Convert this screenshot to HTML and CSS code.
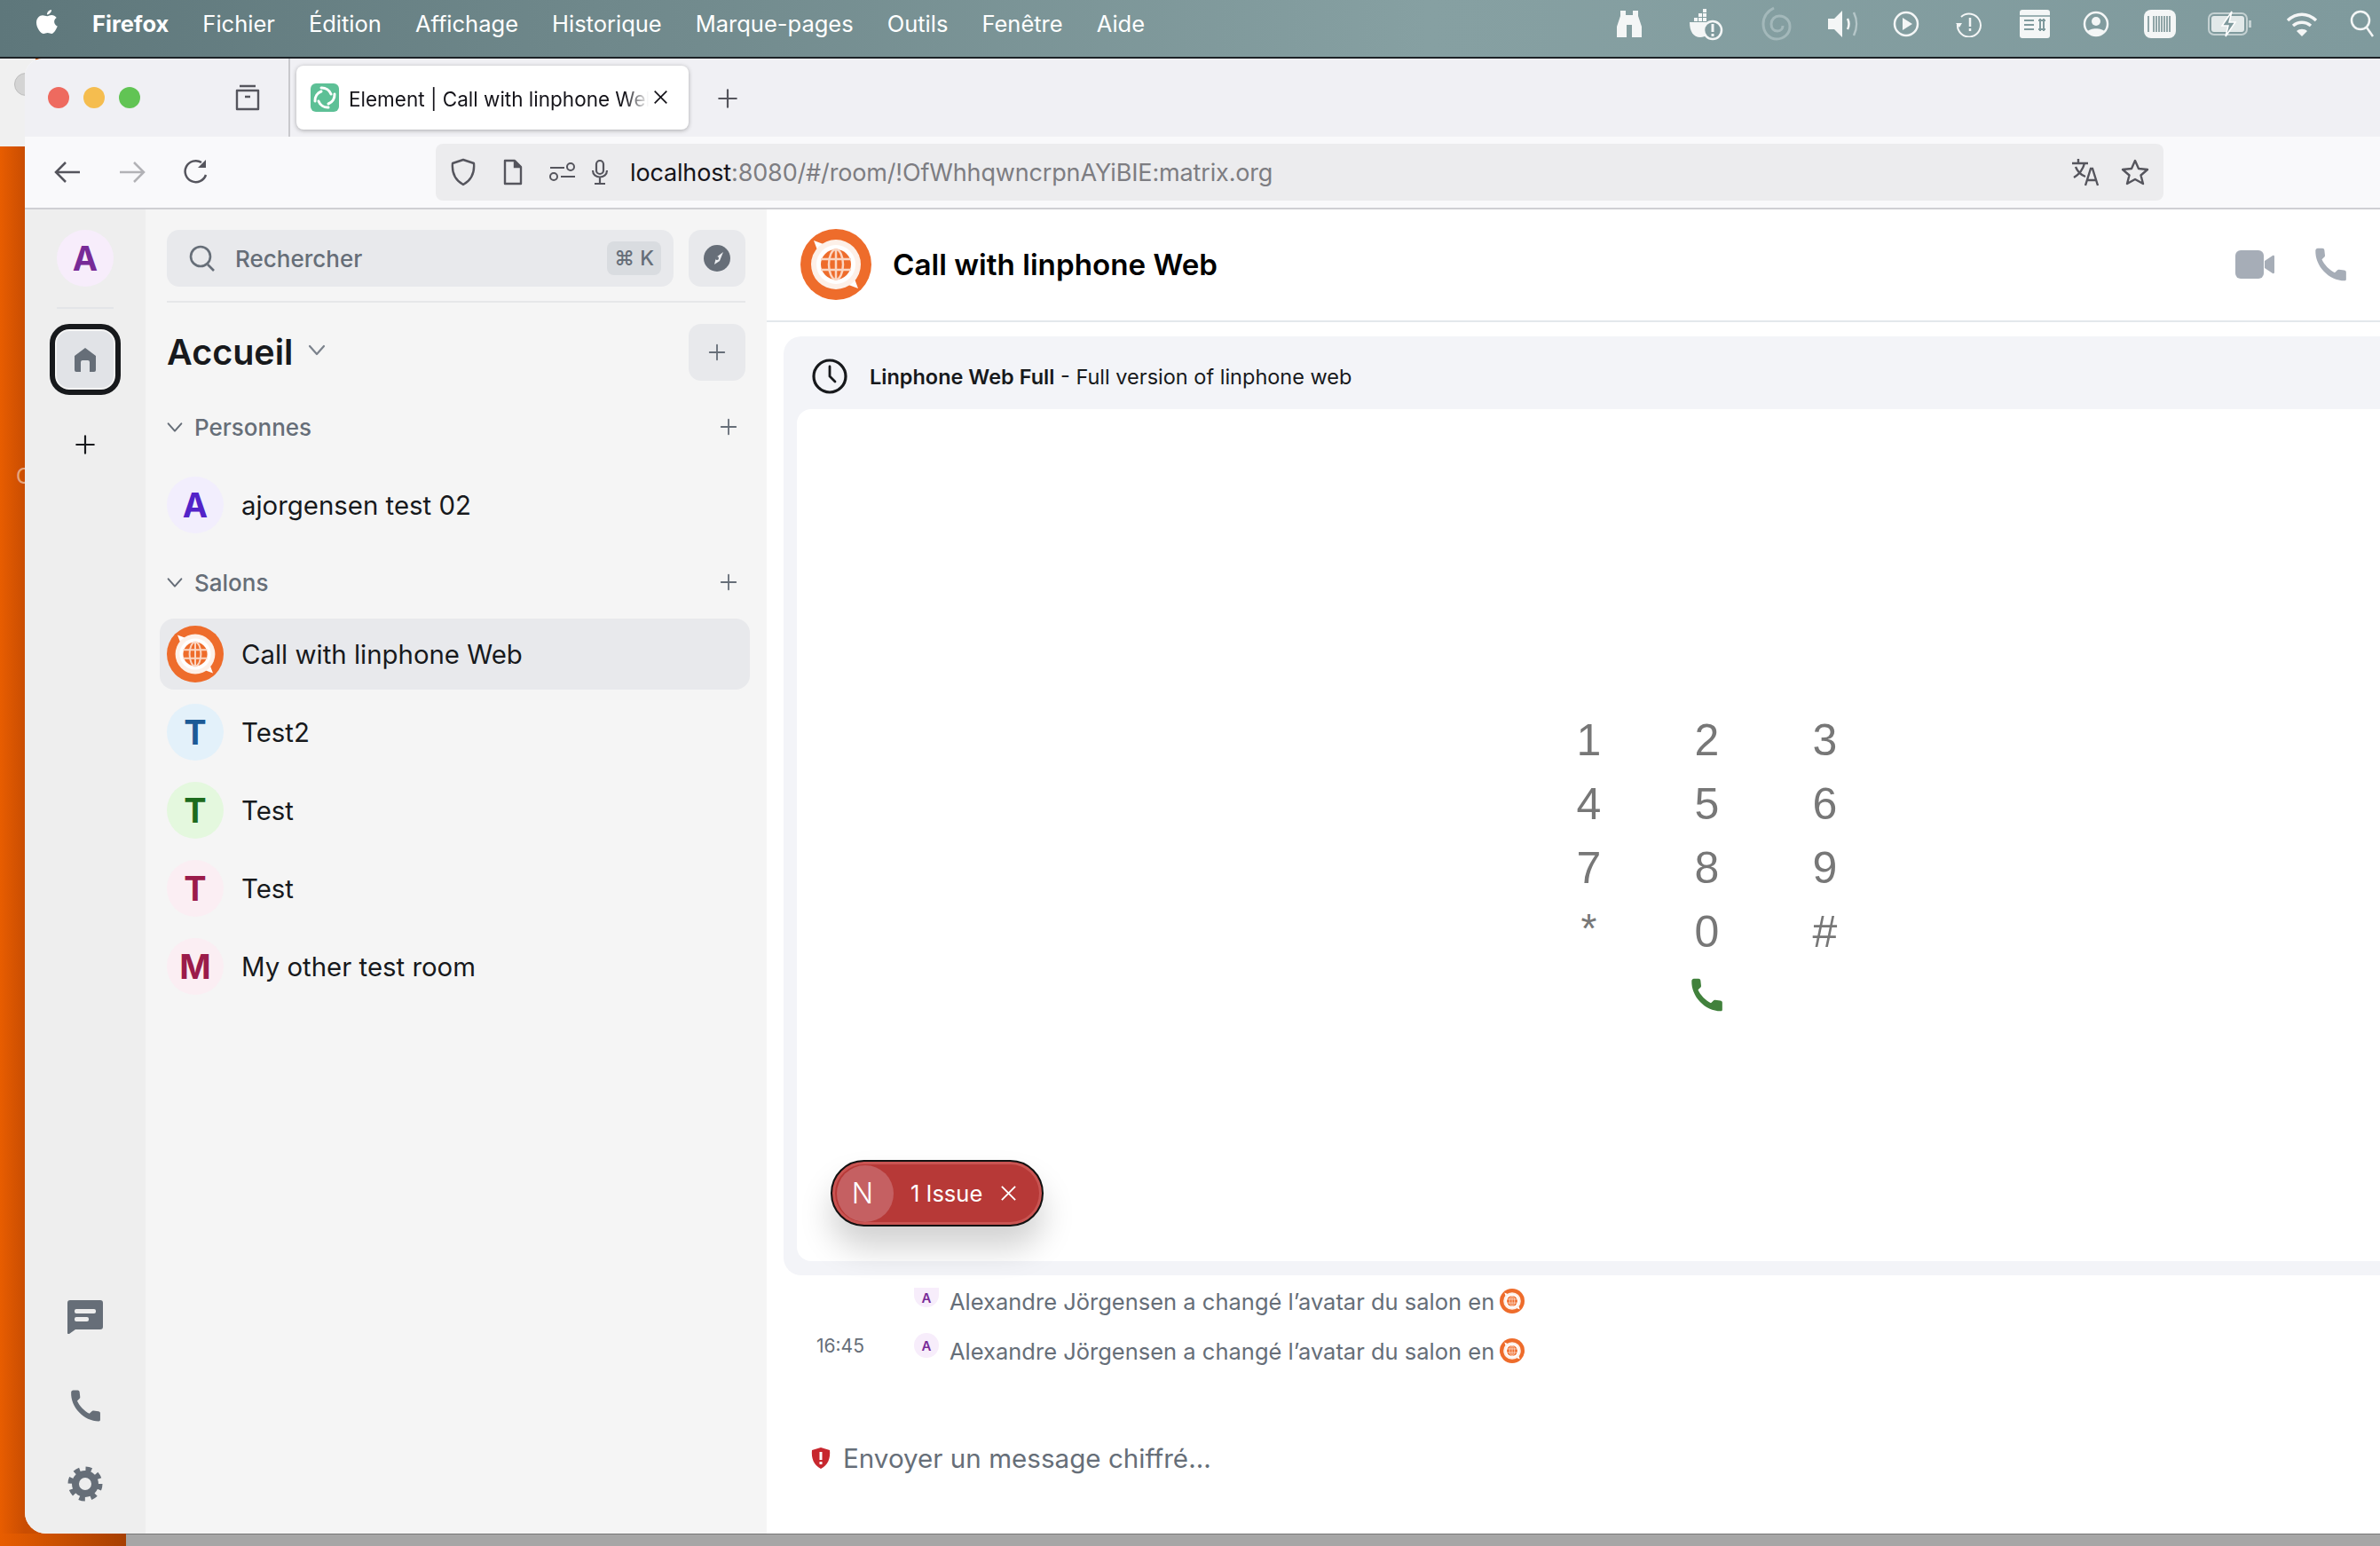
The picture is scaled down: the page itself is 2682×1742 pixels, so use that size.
FILE: index.html
```html
<!DOCTYPE html>
<html>
<head>
  <meta charset="UTF-8">
  <title>Element | Call with linphone Web</title>
  <link rel="stylesheet" href="styles.css">
</head>
<body>
  <svg class="defs" width="0" height="0">
    <symbol id="lin" viewBox="0 0 80 80">
      <circle cx="40" cy="40" r="40" fill="#ee6c2b"/>
      <path d="M15 13l16 6-10 10zM65 67l-16-6 10-10z" fill="#fff"/>
      <circle cx="40" cy="40" r="28" fill="#fdf0e8"/>
      <circle cx="40" cy="40" r="22" fill="#fff"/>
      <circle cx="40" cy="40" r="17" fill="#ee6c2b"/>
      <path d="M23 34h34M23 46h34M40 23v34" stroke="#fbd6c2" stroke-width="2.500"/>
      <ellipse cx="40" cy="40" rx="8" ry="17" fill="none" stroke="#fbd6c2" stroke-width="2.500"/>
    </symbol>
    <symbol id="phone" viewBox="0 0 24 24">
      <path d="M3.500 1h3.200c.7 0 1.200.5 1.300 1.200l.4 3.600c0 .5-.1.900-.5 1.200L6.300 8.600c1.500 3.500 5.200 7.400 8.700 9l1.700-1.700c.3-.3.700-.5 1.200-.4l3.500.4c.8.1 1.300.6 1.300 1.300V22c0 .6-.5 1-1 1C11 23 1.500 13 2 2.400 2.100 1.600 2.700 1 3.500 1z"/>
    </symbol>
    <symbol id="plus" viewBox="0 0 24 24">
      <path d="M12 3v18M3 12h18" fill="none" stroke="currentColor" stroke-width="2" stroke-linecap="round"/>
    </symbol>
    <symbol id="chev" viewBox="0 0 24 24">
      <path d="M4 8l8 9 8-9" fill="none" stroke="currentColor" stroke-width="2.200" stroke-linecap="round" stroke-linejoin="round"/>
    </symbol>
    <symbol id="cross" viewBox="0 0 20 20">
      <path d="M2 2l16 16M18 2L2 18" fill="none" stroke="currentColor" stroke-width="2"/>
    </symbol>
  </svg>

  <div class="menubar">
    <svg class="apple" width="26" height="32" viewBox="0 0 26 32"><path d="M18 1c.2 2.500-2.200 5.500-5 5.400C12.800 3.800 15.400 1.200 18 1zM13.200 8.200c1.400 0 2.800-1.200 5-1.200 2 0 4.200 1 5.500 3-3.800 2.300-3.200 7.800 1 9.500-1 3-4 8.500-6.500 8.500-1.700 0-2.500-1-4.500-1s-3 1-4.500 1C6 28 1 21.500 1 15.500 1 10.500 4.500 7.300 8 7.300c2 0 3.700.9 5.200.9z" fill="#fff"/></svg>
    <span class="menu-item app-name">Firefox</span>
    <span class="menu-item">Fichier</span>
    <span class="menu-item">Édition</span>
    <span class="menu-item">Affichage</span>
    <span class="menu-item">Historique</span>
    <span class="menu-item">Marque-pages</span>
    <span class="menu-item">Outils</span>
    <span class="menu-item">Fenêtre</span>
    <span class="menu-item">Aide</span>
    <div class="tray">
      <span><svg width="32" height="34" viewBox="0 0 32 34" fill="#f4f6f6"><path d="M6 2h6v5h8V2h6v6l4 12v12H19V18h-6v14H2V20L6 8z"/></svg></span>
      <span><svg width="40" height="40" viewBox="0 0 40 40"><path d="M2 18h23v6a11 11 0 0 1-11 11C6 35 2 28 2 18z" fill="#f4f6f6"/><path d="M7 13h4v4H7zM12 13h4v4h-4zM17 13h4v4h-4zM12 8h4v4h-4zM17 8h4v4h-4zM17 3h4v4h-4z" fill="#f4f6f6"/><circle cx="28" cy="27" r="10" fill="#7f9a9d" stroke="#f4f6f6" stroke-width="2.500"/><path d="M28 20v9M28 31v3" stroke="#f4f6f6" stroke-width="3"/></svg></span>
      <span><svg width="34" height="40" viewBox="0 0 34 40" fill="none" stroke="#a3b8ba" stroke-width="3"><path d="M14 2C6 6 2 12 2 20c0 10 7 17 15 17s15-6 15-14c0-7-5-12-12-12-5 0-9 4-9 9s3 8 7 8 6-3 6-6"/></svg></span>
      <span><svg width="40" height="40" viewBox="0 0 40 40" fill="none"><path d="M2 14h7l9-9v30l-9-9H2z" fill="#f4f6f6"/><path d="M24 14c2 4 2 8 0 12" stroke="#f4f6f6" stroke-width="2.500"/><path d="M31 7c4 8 4 18 0 26" stroke="#b5c6c8" stroke-width="2.500"/></svg></span>
      <span><svg width="30" height="30" viewBox="0 0 30 30" fill="none"><circle cx="15" cy="15" r="13" stroke="#f4f6f6" stroke-width="2.500"/><path d="M11 8l11 7-11 7z" fill="#f4f6f6"/></svg></span>
      <span><svg width="30" height="30" viewBox="0 0 30 30" fill="none"><path d="M6 7a13 13 0 1 1-4 8" stroke="#f4f6f6" stroke-width="2"/><path d="M0 14h7l-3 5z" fill="#f4f6f6"/><path d="M16 8v10M16 20v3" stroke="#f4f6f6" stroke-width="2.500"/></svg></span>
      <span><svg width="34" height="32" viewBox="0 0 34 32"><rect width="34" height="32" rx="3" fill="#f4f6f6"/><path d="M0 7h34" stroke="#7f9a9d" stroke-width="1.500"/><path d="M5 12h11M5 17h11M5 22h11M21 12h8M21 22h8M23 10v14M27 10v14" stroke="#7f9a9d" stroke-width="2"/></svg></span>
      <span><svg width="30" height="30" viewBox="0 0 30 30" fill="none"><circle cx="15" cy="15" r="13" stroke="#f4f6f6" stroke-width="2.500"/><circle cx="15" cy="12" r="5" fill="#f4f6f6"/><path d="M5 24c3-5 17-5 20 0-5 5-15 5-20 0z" fill="#f4f6f6"/></svg></span>
      <span><svg width="36" height="32" viewBox="0 0 36 32"><rect width="36" height="32" rx="8" fill="#f4f6f6"/><path d="M5 7v18M11 7v18M14 7v18M17 7v18M20 7v18M23 7v18M26 7v18M29 7v18" stroke="#6f8a8d" stroke-width="1.500"/></svg></span>
      <span><svg width="50" height="30" viewBox="0 0 50 30" fill="none"><rect x="1" y="3" width="43" height="24" rx="6" stroke="#c4d1d2" stroke-width="2"/><rect x="4" y="6" width="37" height="18" rx="3" fill="#e2e9e9"/><path d="M46 11h3v8h-3z" fill="#c4d1d2"/><path d="M27 1L16 17h7l-3 12 11-16h-7z" fill="#7f9a9d" stroke="#fff" stroke-width="1.500"/></svg></span>
      <span><svg width="36" height="30" viewBox="0 0 36 30" fill="none" stroke="#f4f6f6" stroke-width="3.500"><path d="M2 11c10-9 22-9 32 0M8 17c6-5 14-5 20 0M13 22"/><path d="M18 29l-6-6c3-3 9-3 12 0z" fill="#f4f6f6" stroke="none"/></svg></span>
      <span><svg width="30" height="32" viewBox="0 0 30 32" fill="none" stroke="#f4f6f6" stroke-width="2.500"><circle cx="12" cy="12" r="10"/><path d="M19 20l7 10"/></svg></span>
    </div>
  </div>
  <div class="menu-edge"></div>

  <div class="desktop">
    <div class="desktop-main">
      <div class="back-window"></div>
      <span class="desk-glyph">C</span>
      <div class="browser">
        <div class="tabbar">
          <div class="lights">
            <i class="light red"></i><i class="light yellow"></i><i class="light green"></i>
          </div>
          <svg class="tabs-icon" width="32" height="32" viewBox="0 0 32 32" fill="none" stroke="#55555d" stroke-width="2.400"><path d="M7 3h18M4 8h24v21H4z" stroke-linejoin="round"/><path d="M13 15h6"/></svg>
          <div class="tab">
            <svg width="32" height="32" viewBox="0 0 32 32"><rect width="32" height="32" rx="6" fill="#5dc096"/><g fill="none" stroke="#fff" stroke-width="3" stroke-linecap="round"><path d="M12 5a11 11 0 0 1 11 7"/><path d="M27 12a11 11 0 0 1-7 11"/><path d="M20 27a11 11 0 0 1-11-7"/><path d="M5 20a11 11 0 0 1 7-11"/></g></svg>
            <span class="tab-title">Element | Call with linphone Web</span>
            <svg class="tab-close" width="17" height="17" color="#15141a"><use href="#cross"/></svg>
          </div>
          <svg class="tab-new" width="26" height="26" color="#55555d"><use href="#plus"/></svg>
        </div>
        <div class="toolbar">
          <svg class="nav" width="32" height="28" viewBox="0 0 32 28" fill="none" stroke="#55555d" stroke-width="2.500"><path d="M30 14H4M14 3L3 14l11 11"/></svg>
          <svg class="nav" width="32" height="28" viewBox="0 0 32 28" fill="none" stroke="#b2b2b6" stroke-width="2.500"><path d="M2 14h26M18 3l11 11-11 11"/></svg>
          <svg class="nav" width="30" height="30" viewBox="0 0 30 30" fill="none" stroke="#55555d" stroke-width="2.500"><path d="M26 18A12 12 0 1 1 21 4"/><path d="M26 1v9h-9z" fill="#55555d" stroke="none"/></svg>
          <div class="urlbar">
            <svg width="30" height="32" viewBox="0 0 30 32" fill="none" stroke="#55555d" stroke-width="2.400"><path d="M15 2l12 4c1 11-3 19-12 24C6 25 2 17 3 6z" stroke-linejoin="round"/></svg>
            <svg class="url-doc" width="24" height="30" viewBox="0 0 24 30" fill="none" stroke="#55555d" stroke-width="2.400"><path d="M3 2h11l7 7v19H3z" stroke-linejoin="round"/><path d="M14 2v7h7" fill="#55555d"/></svg>
            <svg class="url-perm" width="30" height="24" viewBox="0 0 30 24" fill="none" stroke="#55555d" stroke-width="2"><path d="M1 7h16M13 17h16"/><circle cx="24" cy="6" r="4"/><circle cx="5" cy="17" r="4"/></svg>
            <svg class="url-mic" width="20" height="30" viewBox="0 0 20 30" fill="none" stroke="#55555d" stroke-width="2.200"><rect x="6" y="2" width="8" height="15" rx="4"/><path d="M2 13c0 10 16 10 16 0M10 21v7M4 28h12"/></svg>
            <div class="url-text"><span class="url-host">localhost</span>:8080/#/room/!OfWhhqwncrpnAYiBIE:matrix.org</div>
            <svg class="url-trans" width="32" height="32" viewBox="0 0 32 32" fill="none" stroke="#55555d" stroke-width="2.400"><path d="M1 6h18M8 1v5M15 6C13 14 8 19 3 22M5 10c2 5 6 9 11 11M16 31l6-19h2l6 19M18 25h10"/></svg>
            <svg width="32" height="32" viewBox="0 0 32 32" fill="none" stroke="#55555d" stroke-width="2.400"><path d="M16 3l4 9 10 1-7.500 6.500L25 29l-9-5-9 5 2.500-9.500L2 13l10-1z" stroke-linejoin="round"/></svg>
          </div>
        </div>

        <div class="app">
          <nav class="rail">
            <div class="avatar space-avatar">A</div>
            <div class="rail-sep"></div>
            <div class="home-btn">
              <svg width="28" height="28" viewBox="0 0 28 28" fill="#666e78"><path d="M14 1L26 10v16a2 2 0 0 1-2 2h-5V17a2 2 0 0 0-2-2h-6a2 2 0 0 0-2 2v11H4a2 2 0 0 1-2-2V10z"/></svg>
            </div>
            <svg class="rail-plus" width="26" height="26" color="#17191c"><use href="#plus"/></svg>
            <div class="rail-bottom">
              <svg class="rail-chat" width="40" height="38" viewBox="0 0 40 38"><path d="M3 0h34a3 3 0 0 1 3 3v27a3 3 0 0 1-3 3H9l-7 5c-1 .5-2 0-2-1V3a3 3 0 0 1 3-3z" fill="#666e78"/><rect x="8" y="10" width="24" height="5" rx="2" fill="#eee"/><rect x="8" y="19" width="16" height="5" rx="2" fill="#eee"/></svg>
              <svg class="rail-phone" width="38" height="38" fill="#666e78"><use href="#phone"/></svg>
              <svg class="rail-gear" width="40" height="40" viewBox="0 0 40 40" fill="none" stroke="#666e78"><circle cx="20" cy="20" r="11" stroke-width="8"/><circle cx="20" cy="20" r="16.500" stroke-width="6" stroke-dasharray="6.500 6.460"/></svg>
            </div>
          </nav>

          <aside class="panel">
            <div class="search-row">
              <div class="search">
                <svg width="32" height="32" viewBox="0 0 32 32" fill="none" stroke="#666e78" stroke-width="2.600"><circle cx="14" cy="14" r="11"/><path d="M22 23l7 7"/></svg>
                <span class="search-label">Rechercher</span>
                <span class="kbd">⌘ K</span>
              </div>
              <div class="square-btn">
                <svg width="30" height="30" viewBox="0 0 30 30"><circle cx="15" cy="15" r="15" fill="#666e78"/><path d="M22 8l-4 10-6 4 2-8z" fill="#eceef1"/><circle cx="15" cy="15" r="2" fill="#666e78"/></svg>
              </div>
            </div>
            <div class="panel-sep"></div>
            <div class="home-row">
              <h1 class="home-title">Accueil</h1>
              <svg class="home-chev" width="24" height="24" color="#7b828c"><use href="#chev"/></svg>
              <div class="square-btn push"><svg width="22" height="22" color="#666e78"><use href="#plus"/></svg></div>
            </div>

            <div class="section-head">
              <svg class="section-chev" width="22" height="22" color="#666e78"><use href="#chev"/></svg>
              <span class="section-name">Personnes</span>
              <svg class="section-add" width="22" height="22" color="#666e78"><use href="#plus"/></svg>
            </div>
            <div class="room first-room">
              <div class="avatar av-violet">A</div><span class="room-name">ajorgensen test 02</span>
            </div>

            <div class="section-head salons">
              <svg class="section-chev" width="22" height="22" color="#666e78"><use href="#chev"/></svg>
              <span class="section-name">Salons</span>
              <svg class="section-add" width="22" height="22" color="#666e78"><use href="#plus"/></svg>
            </div>
            <div class="room selected">
              <svg class="room-pic" width="64" height="64"><use href="#lin"/></svg><span class="room-name">Call with linphone Web</span>
            </div>
            <div class="room"><div class="avatar av-blue">T</div><span class="room-name">Test2</span></div>
            <div class="room"><div class="avatar av-green">T</div><span class="room-name">Test</span></div>
            <div class="room"><div class="avatar av-pink">T</div><span class="room-name">Test</span></div>
            <div class="room"><div class="avatar av-pink">M</div><span class="room-name">My other test room</span></div>
          </aside>

          <main class="main">
            <header class="room-head">
              <svg width="80" height="80"><use href="#lin"/></svg>
              <h2 class="room-title">Call with linphone Web</h2>
              <svg class="head-video" width="44" height="34" viewBox="0 0 44 34" fill="#a6adb7"><rect y="1" width="32" height="32" rx="6"/><path d="M33 13l9-6c1-.5 2 0 2 1v18c0 1-1 1.500-2 1l-9-6z"/></svg>
              <svg class="head-phone" width="40" height="40" fill="#a6adb7"><use href="#phone"/></svg>
            </header>

            <section class="widget">
              <div class="widget-title">
                <svg width="40" height="40" viewBox="0 0 40 40" fill="none" stroke="#17191c" stroke-width="3.200"><circle cx="20" cy="20" r="18"/><path d="M20 9v11l6 6" stroke-linecap="round" stroke-width="2.800"/></svg>
                <span class="widget-text"><b>Linphone Web Full</b> - Full version of linphone web</span>
              </div>
              <div class="widget-frame">
                <div class="dialpad">
                  <span>1</span><span>2</span><span>3</span>
                  <span>4</span><span>5</span><span>6</span>
                  <span>7</span><span>8</span><span>9</span>
                  <span class="star">*</span><span>0</span><span>#</span>
                  <span class="dial-call"><svg width="40" height="40" fill="#41813c"><use href="#phone"/></svg></span>
                </div>
                <div class="issue-pill">
                  <span class="issue-n">N</span>
                  <span class="issue-text">1 Issue</span>
                  <svg class="issue-x" width="19" height="19" color="#fff"><use href="#cross"/></svg>
                </div>
              </div>
            </section>

            <div class="timeline">
              <div class="event clipped">
                <span class="event-time"></span>
                <span class="mini-avatar">A</span>
                <span class="event-text">Alexandre Jörgensen a changé l’avatar du salon en</span>
                <svg class="mini-pic" width="28" height="28"><use href="#lin"/></svg>
              </div>
              <div class="event">
                <span class="event-time">16:45</span>
                <span class="mini-avatar">A</span>
                <span class="event-text">Alexandre Jörgensen a changé l’avatar du salon en</span>
                <svg class="mini-pic" width="28" height="28"><use href="#lin"/></svg>
              </div>
            </div>

            <div class="composer">
              <svg width="22" height="24" viewBox="0 0 22 24"><path d="M11 0l10 3c1 9-2 17-10 21C3 20 0 12 1 3z" fill="#c7272e"/><path d="M11 5v9M11 16v3" stroke="#fff" stroke-width="3"/></svg>
              <span class="composer-text">Envoyer un message chiffré...</span>
            </div>
          </main>
        </div>
      </div>
    </div>
    <div class="desktop-bottom">
      <div class="bottom-orange"></div>
      <div class="bottom-grey"></div>
    </div>
  </div>
</body>
</html>
```

FILE: styles.css
```css
* {
  box-sizing: border-box;
}
html, body {
  margin: 0;
  width: 2682px;
  height: 1742px;
  overflow: hidden;
}
body {
  font-family: Inter, "Liberation Sans", sans-serif;
  background: #a5a5a5;
}
.defs {
  position: absolute;
}

/* mac menu bar */
.menubar {
  height: 64px;
  display: flex;
  align-items: center;
  padding: 0 0 12px 40px;
  color: #fff;
  font-size: 25.500px;
  background: linear-gradient(90deg, #5e777b 0%, #6f888b 25%, #86a0a2 60%, #7f9a9d 100%);
}
.menu-edge {
  height: 2px;
  background: #1c2226;
}
.apple {
  margin-right: 38px;
}
.menu-item {
  margin-right: 38px;
}
.app-name {
  font-weight: 700;
}
.tray {
  position: absolute;
  top: 7px;
  left: 1793px;
  display: flex;
  align-items: center;
  height: 40px;
}
.tray span {
  display: flex;
  justify-content: center;
  align-items: center;
}
.tray span:nth-child(1) { width: 86px; }
.tray span:nth-child(2) { width: 86px; }
.tray span:nth-child(3) { width: 74px; }
.tray span:nth-child(4) { width: 78px; }
.tray span:nth-child(5) { width: 62px; }
.tray span:nth-child(6) { width: 80px; }
.tray span:nth-child(7) { width: 68px; }
.tray span:nth-child(8) { width: 70px; }
.tray span:nth-child(9) { width: 74px; }
.tray span:nth-child(10) { width: 84px; }
.tray span:nth-child(11) { width: 78px; }
.tray span:nth-child(12) { width: 60px; }

/* desktop around the window */
.desktop {
  height: 1676px;
  display: flex;
  flex-direction: column;
}
.desktop-main {
  height: 1662px;
  display: flex;
  background: linear-gradient(90deg, #e85d00 0, #c94d02 28px);
  position: relative;
}
.back-window {
  position: absolute;
  left: 0;
  top: 0;
  width: 40px;
  height: 99px;
  background: #f0f0f0;
}
.back-window::after {
  content: "";
  position: absolute;
  left: 16px;
  top: 16px;
  width: 24px;
  height: 24px;
  border-radius: 50%;
  background: #d4d4d4;
  border: 1px solid #bdbdbd;
}
.desk-glyph {
  position: absolute;
  left: 18px;
  top: 456px;
  font-size: 24px;
  color: rgba(255, 255, 255, 0.5);
}
.desktop-bottom {
  height: 14px;
  display: flex;
}
.bottom-orange {
  width: 142px;
  background: linear-gradient(90deg, #e85d00, #a63f02);
}
.bottom-grey {
  flex: 1;
  background: #a6a6a6;
  border-top: 1px solid #777;
}

/* browser window */
.browser {
  position: relative;
  margin-left: 28px;
  width: 2654px;
  flex: none;
  display: flex;
  flex-direction: column;
  border-radius: 20px 0 0 24px;
  overflow: hidden;
  background: #fff;
}
.tabbar {
  height: 88px;
  display: flex;
  align-items: center;
  background: #f0f0f4;
}
.lights {
  display: flex;
  gap: 16px;
  margin-left: 26px;
}
.light {
  width: 24px;
  height: 24px;
  border-radius: 50%;
}
.red { background: #ee6a5f; }
.yellow { background: #f5bd4f; }
.green { background: #61c454; }
.tabs-icon {
  margin-left: 105px;
}
.tab {
  align-self: flex-start;
  margin: 8px 0 0 39px;
  width: 442px;
  height: 72px;
  background: #fff;
  border-radius: 8px;
  box-shadow: 0 1px 5px rgba(0, 0, 0, 0.3);
  display: flex;
  align-items: center;
  padding-left: 16px;
  position: relative;
}
.tabs-icon + .tab::before {
  content: "";
  position: absolute;
  left: -9px;
  top: -8px;
  height: 88px;
  width: 2px;
  background: #c9c9cd;
}
.tab-title {
  margin: 3px 0 0 11px;
  width: 338px;
  overflow: hidden;
  white-space: nowrap;
  font-size: 22.500px;
  color: #15141a;
  -webkit-mask-image: linear-gradient(90deg, #000 92%, transparent);
}
.tab-close {
  margin-left: 5px;
  margin-top: -2px;
  flex: none;
}
.tab-new {
  margin-left: 31px;
  margin-top: 2px;
}
.toolbar {
  height: 82px;
  display: flex;
  align-items: center;
  background: #f9f9fb;
  border-bottom: 2px solid #cfcfd3;
  padding-left: 32px;
}
.nav {
  margin-right: 41px;
}
.urlbar {
  margin-left: 214px;
  height: 64px;
  width: 1947px;
  background: #ececee;
  border-radius: 8px;
  display: flex;
  align-items: center;
  padding: 0 16px 0 16px;
}
.url-doc {
  margin-left: 29px;
}
.url-perm {
  margin-left: 29px;
}
.url-mic {
  margin-left: 17px;
}
.url-text {
  margin-left: 24px;
  flex: 1;
  font-size: 27px;
  letter-spacing: -0.15px;
  color: #7d7d82;
}
.url-host {
  color: #15141a;
}
.url-trans {
  margin-right: 24px;
}

/* element app */
.app {
  height: 1492px;
  display: flex;
}
.rail {
  width: 136px;
  flex: none;
  background: #eeeeee;
  display: flex;
  flex-direction: column;
  align-items: center;
  padding-top: 23px;
}
.avatar {
  width: 64px;
  height: 64px;
  flex: none;
  border-radius: 50%;
  display: flex;
  align-items: center;
  justify-content: center;
  font-size: 38px;
  font-weight: 700;
}
.space-avatar {
  background: #f7edfb;
  color: #772a97;
}
.rail-sep {
  width: 64px;
  height: 2px;
  margin-top: 23px;
  background: #e3e5e8;
}
.home-btn {
  margin-top: 17px;
  width: 80px;
  height: 80px;
  border: 6px solid #17191c;
  border-radius: 22px;
  background: #e1e3e7;
  box-shadow: inset 0 0 0 2px #f5f5f5;
  display: flex;
  align-items: center;
  justify-content: center;
}
.rail-plus {
  margin-top: 43px;
}
.rail-bottom {
  margin-top: auto;
  display: flex;
  flex-direction: column;
  align-items: center;
  padding-bottom: 36px;
}
.rail-phone {
  margin-top: 62px;
}
.rail-gear {
  margin-top: 49px;
}
.panel {
  width: 700px;
  flex: none;
  background: #f5f5f5;
  padding: 23px 24px 0 24px;
}
.search-row {
  display: flex;
  gap: 17px;
}
.search {
  flex: 1;
  height: 64px;
  border-radius: 14px;
  background: #e8e9ec;
  display: flex;
  align-items: center;
  padding: 0 14px 0 24px;
}
.search-label {
  margin-left: 21px;
  flex: 1;
  font-size: 26px;
  font-weight: 500;
  color: #666e78;
}
.kbd {
  background: #d9dce0;
  border-radius: 8px;
  padding: 5px 8px;
  font-size: 23px;
  font-weight: 500;
  color: #666e78;
}
.square-btn {
  width: 64px;
  height: 64px;
  flex: none;
  border-radius: 14px;
  background: #e8e9ec;
  display: flex;
  align-items: center;
  justify-content: center;
}
.push {
  margin-left: auto;
}
.panel-sep {
  height: 2px;
  margin-top: 16px;
  background: #e6e7e9;
}
.home-row {
  margin-top: 24px;
  display: flex;
  align-items: center;
}
.home-title {
  margin: 0;
  font-size: 39.500px;
  font-weight: 600;
  color: #17191c;
}
.home-chev {
  margin: 0 0 6px 15px;
}
.section-head {
  margin-top: 32px;
  height: 40px;
  display: flex;
  align-items: center;
}
.section-chev {
  margin-left: -2px;
}
.section-name {
  margin-left: 11px;
  font-size: 26px;
  font-weight: 500;
  color: #666e78;
}
.section-add {
  margin-left: auto;
  margin-right: 8px;
}
.salons {
  margin-top: 27px;
}
.room {
  margin: 0 -5px 8px -8px;
  height: 80px;
  padding-left: 8px;
  display: flex;
  align-items: center;
  border-radius: 16px;
}
.first-room {
  margin-top: 28px;
}
.salons + .room {
  margin-top: 21px;
}
.selected {
  background: #e8e9ec;
}
.room-pic {
  flex: none;
}
.room-name {
  margin-left: 20px;
  font-size: 29.400px;
  color: #17191c;
}
.av-violet { background: #f2eefd; color: #5323c8; }
.av-blue { background: #e3f1fa; color: #1c5a96; }
.av-green { background: #e4f8de; color: #1d6b1d; }
.av-pink { background: #fbeef3; color: #9b1b4a; }

.main {
  flex: 1;
  min-width: 0;
  display: flex;
  flex-direction: column;
  background: #fff;
}
.room-head {
  height: 127px;
  flex: none;
  display: flex;
  align-items: center;
  padding: 0 36px 1px 38px;
  border-bottom: 2px solid #e3e8ec;
}
.room-title {
  margin: 0 0 0 24px;
  flex: 1;
  font-size: 33.200px;
  font-weight: 600;
  color: #000;
}
.head-phone {
  margin-left: 43px;
}
.widget {
  margin: 16px 0 0 19px;
  height: 1058px;
  flex: none;
  background: #f3f4f8;
  border-radius: 20px 0 0 20px;
  display: flex;
  flex-direction: column;
  padding: 0 0 16px 15px;
}
.widget-title {
  height: 82px;
  flex: none;
  display: flex;
  align-items: center;
  padding: 8px 0 0 17px;
}
.widget-text {
  margin-left: 25px;
  font-size: 23.500px;
  color: #17191c;
}
.widget-text b {
  font-weight: 600;
}
.widget-frame {
  flex: 1;
  position: relative;
  background: #fff;
  border-radius: 16px 0 0 16px;
  padding: 337px 0 0 826px;
}
.dialpad {
  display: grid;
  grid-template-columns: repeat(3, 133px);
  grid-auto-rows: 72px;
  font-family: "Liberation Sans", sans-serif;
  font-size: 50px;
  color: #777;
}
.dialpad span {
  display: flex;
  align-items: center;
  justify-content: center;
}
.dialpad .dial-call {
  grid-column: 2;
  margin: -2px 2px 0 0;
}
.dialpad .star {
  align-items: flex-start;
  padding-top: 5px;
  font-size: 46px;
}
.issue-pill {
  position: absolute;
  left: 38px;
  bottom: 39px;
  width: 240px;
  height: 75px;
  display: flex;
  align-items: center;
  padding-left: 5px;
  background: #b73937;
  border-radius: 38px;
  border: 2px solid #111;
  box-shadow: inset 0 0 0 3px #c95452, 0 24px 36px rgba(0, 0, 0, 0.18);
  color: #fff;
}
.issue-n {
  width: 64px;
  height: 64px;
  border-radius: 50%;
  background: #c56062;
  display: flex;
  align-items: center;
  justify-content: center;
  font-size: 32px;
  font-weight: 300;
  padding-right: 6px;
}
.issue-text {
  margin-left: 19px;
  font-size: 25.500px;
  font-weight: 400;
}
.issue-x {
  margin-left: 20px;
  flex: none;
}
.timeline {
  height: 120px;
  flex: none;
  padding-top: 1px;
  overflow: hidden;
}
.event {
  height: 56px;
  display: flex;
  align-items: center;
  padding-left: 56px;
  position: relative;
}
.event.clipped .mini-avatar {
  margin-top: -8px;
  height: 22px;
  border-radius: 0 0 14px 14px;
  width: 28px;
}
.event-time {
  width: 110px;
  flex: none;
  font-size: 21px;
  color: #666e78;
  margin-top: -12px;
}
.mini-avatar {
  width: 28px;
  height: 28px;
  flex: none;
  border-radius: 50%;
  background: #f7edfb;
  color: #772a97;
  font-size: 15px;
  font-weight: 600;
  display: flex;
  align-items: center;
  justify-content: center;
  margin-top: -12px;
}
.event-text {
  margin-left: 12px;
  font-size: 25.500px;
  color: #666e78;
}
.mini-pic {
  margin-left: 6px;
}
.composer {
  display: flex;
  align-items: center;
  padding: 68px 0 0 50px;
}
.composer-text {
  margin-left: 14px;
  font-size: 29.600px;
  color: #666e78;
}
```
